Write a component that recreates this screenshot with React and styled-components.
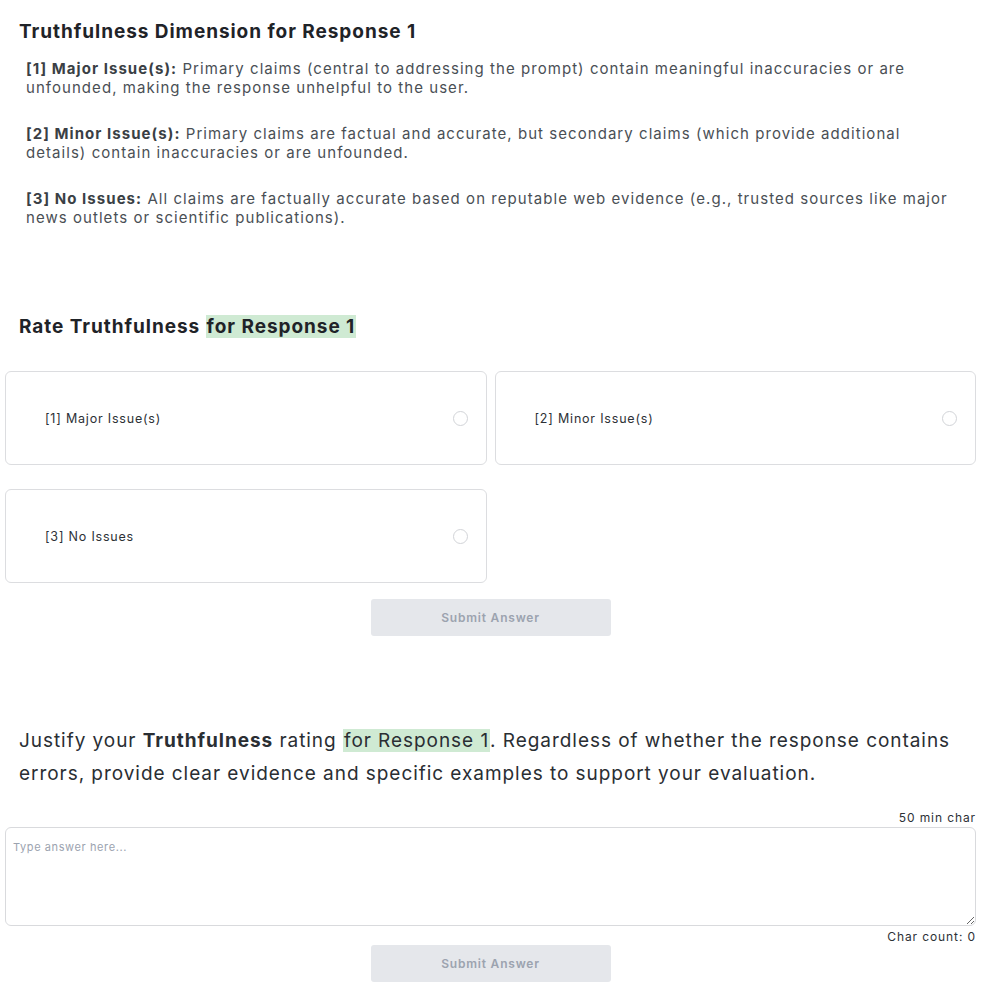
import styled, { createGlobalStyle } from "styled-components";

const GlobalStyle = createGlobalStyle`
  body {
    margin: 0;
    background: #fff;
    font-family: Inter, "Noto Sans", sans-serif;
    color: #1f2328;
  }
  * { box-sizing: border-box; }
`;

const options = [
  { id: 1, label: "[1] Major Issue(s)" },
  { id: 2, label: "[2] Minor Issue(s)" },
  { id: 3, label: "[3] No Issues" },
];

const rubric = [
  {
    title: "[1] Major Issue(s):",
    text: "Primary claims (central to addressing the prompt) contain meaningful inaccuracies or are unfounded, making the response unhelpful to the user.",
  },
  {
    title: "[2] Minor Issue(s):",
    text: "Primary claims are factual and accurate, but secondary claims (which provide additional details) contain inaccuracies or are unfounded.",
  },
  {
    title: "[3] No Issues:",
    text: "All claims are factually accurate based on reputable web evidence (e.g., trusted sources like major news outlets or scientific publications).",
  },
];

function App() {
  return (
    <Page>
      <GlobalStyle />
      <Heading>Truthfulness Dimension for Response 1</Heading>
      <Rubric>
        {rubric.map((r) => (
          <p key={r.title}>
            <strong>{r.title}</strong> {r.text}
          </p>
        ))}
      </Rubric>

      <RateHeading>
        Rate Truthfulness <Mark>for Response 1</Mark>
      </RateHeading>
      <Options>
        {options.map((o) => (
          <Option key={o.id}>
            <span>{o.label}</span>
            <Radio />
          </Option>
        ))}
      </Options>
      <SubmitButton disabled $top={16}>Submit Answer</SubmitButton>

      <Prompt>
        Justify your <b>Truthfulness</b> rating <Mark>for Response 1</Mark>. Regardless of whether the response contains
        errors, provide clear evidence and specific examples to support your evaluation.
      </Prompt>
      <Meta $top={20}>50 min char</Meta>
      <Answer placeholder="Type answer here..." />
      <Meta $top={3}>Char count: 0</Meta>
      <SubmitButton disabled $top={0}>Submit Answer</SubmitButton>
    </Page>
  );
}

const Page = styled.div`
  width: 971px;
  margin-left: 5px;
  padding: 20px 0 11px;
  display: flex;
  flex-direction: column;
`;

const Heading = styled.h2`
  margin: 0 0 0 14px;
  font-size: 19px;
  font-weight: 700;
  line-height: 24px;
  letter-spacing: 0.95px;
  color: #1f2328;
`;

const Rubric = styled.div`
  margin: 15px 0 0 21px;
  padding-right: 20px;
  p {
    margin: 0 0 27px;
    font-size: 15px;
    line-height: 19px;
    color: #4a4f55;
    letter-spacing: 1.05px;
  }
  p:last-child {
    margin-bottom: 0;
  }
  strong {
    color: #3a3f45;
    font-weight: 700;
  }
`;

const RateHeading = styled.h3`
  margin: 88px 0 0 14px;
  font-size: 19px;
  font-weight: 700;
  line-height: 24px;
  letter-spacing: 0.95px;
  color: #1f2328;
`;

const Mark = styled.span`
  background: #cfead3;
  padding: 0 1px;
`;

const Options = styled.div`
  margin-top: 32px;
  display: grid;
  grid-template-columns: 1fr 1fr;
  column-gap: 8px;
  row-gap: 24px;
`;

const Option = styled.label`
  height: 94px;
  border: 1px solid #dcdde0;
  border-radius: 6px;
  padding: 0 18px 0 39px;
  display: flex;
  align-items: center;
  justify-content: space-between;
  font-size: 12.5px;
  letter-spacing: 0.8px;
  color: #2d3136;
  cursor: pointer;
`;

const Radio = styled.span`
  width: 15px;
  height: 15px;
  border-radius: 50%;
  border: 1px solid #d2d4d8;
  background: #fff;
`;

const SubmitButton = styled.button`
  align-self: center;
  width: 240px;
  height: 37px;
  margin-top: ${(p) => p.$top}px;
  border: none;
  border-radius: 3px;
  background: #e5e7eb;
  color: #9ca3af;
  font-family: Inter, sans-serif;
  font-size: 12px;
  font-weight: 600;
  letter-spacing: 0.8px;
`;

const Prompt = styled.p`
  margin: 88px 0 0 14px;
  font-size: 19px;
  line-height: 33px;
  letter-spacing: 0.95px;
  color: #2a2e33;
  b { font-weight: 700; }
`;

const Meta = styled.div`
  align-self: flex-end;
  margin-top: ${(p) => p.$top}px;
  font-size: 12px;
  line-height: 16px;
  letter-spacing: 0.9px;
  color: #2d3136;
`;

const Answer = styled.textarea`
  height: 99px;
  margin-top: 1px;
  padding: 12px 7px;
  border: 1px solid #d9dadd;
  border-radius: 6px;
  font-family: Inter, sans-serif;
  font-size: 11px;
  letter-spacing: 0.6px;
  resize: vertical;
  &::placeholder { color: #9ca3af; }
`;

export default App;
